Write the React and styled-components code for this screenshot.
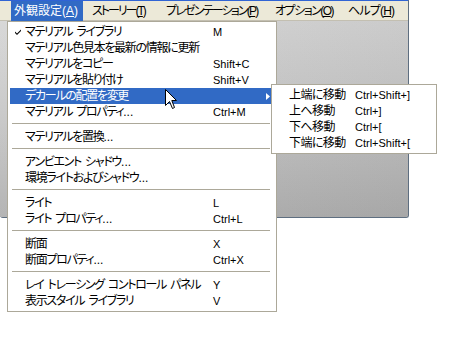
import React from 'react';
import styled, { createGlobalStyle } from 'styled-components';

const Global = createGlobalStyle`
  html, body { margin: 0; padding: 0; background: #fff; }
  body {
    font-family: "Liberation Sans", "Noto Sans CJK JP", sans-serif;
    font-size: 12px;
    font-feature-settings: "palt" 1;
    color: #000;
  }
`;

const Page = styled.div`
  position: relative;
  width: 476px;
  height: 346px;
  overflow: hidden;
  background: #fff;
`;

const Window = styled.div`
  width: 408px;
  height: 217px;
  display: flex;
  flex-direction: column;
  border-right: 1px solid #5e6e80;
  border-bottom: 1px solid #5e6e80;
  border-bottom-right-radius: 3px;
  border-bottom-left-radius: 3px;
  overflow: hidden;
  background: #c4c4c4;
`;

const TopLine = styled.div`
  height: 1px;
  background: #3064d4;
`;

const MenuBar = styled.div`
  height: 20px;
  display: flex;
  align-items: stretch;
  gap: 6px;
  padding-left: 11px;
  background: #ece9d8;
  box-shadow: inset 0 -1px 0 #c3bfb1;
`;

const BarItem = styled.div`
  width: ${p => p.$w}px;
  padding-left: 3px;
  box-sizing: border-box;
  display: flex;
  align-items: center;
  white-space: nowrap;
  line-height: 20px;
  letter-spacing: ${p => p.$ls}px;
  background: ${p => (p.$active ? '#316ac5' : 'transparent')};
  color: ${p => (p.$active ? '#fff' : '#000')};
  u { text-decoration: underline; text-underline-offset: 1px; }
`;

const Content = styled.div`
  flex: 1;
  background:
    linear-gradient(90deg, rgba(255,255,255,0.06), rgba(0,0,0,0.05)),
    linear-gradient(180deg, #d6d6d6 0%, #c6c6c6 50%, #b0b0b0 100%);
`;

const Menu = styled.div`
  position: absolute;
  left: ${p => p.$x}px;
  top: ${p => p.$y}px;
  width: ${p => p.$w}px;
  box-sizing: border-box;
  background: #fff;
  border: 1px solid #aca899;
  padding: 2px;
  display: flex;
  flex-direction: column;
`;

const Row = styled.div`
  height: 16px;
  line-height: 16px;
  display: grid;
  grid-template-columns: 15px ${p => p.$labelCol}px 1fr 10px;
  align-items: center;
  white-space: nowrap;
  background: ${p => (p.$active ? '#316ac5' : 'transparent')};
  color: ${p => (p.$active ? '#fff' : '#000')};
`;

const CheckCell = styled.div`
  display: flex;
  align-items: center;
  justify-content: flex-end;
  padding-right: 4px;
  height: 16px;
`;

const Label = styled.span`
  font-size: 12px;
  letter-spacing: ${p => p.$ls}px;
  word-spacing: 2px;
`;

const Dots = styled.span`
  letter-spacing: 0;
`;

const Shortcut = styled.span`
  font-size: 11px;
  font-family: "Liberation Sans", sans-serif;
`;

const ArrowCell = styled.div`
  display: flex;
  align-items: center;
  padding-left: 2px;
  height: 16px;
`;

const Separator = styled.div`
  height: 1px;
  margin: 3px 4px 5px 2px;
  background: #aca899;
`;

const Cursor = styled.svg`
  position: absolute;
  left: 165px;
  top: 89px;
`;

const Check = () => (
  <svg width="6" height="6" viewBox="0 0 6 6">
    <path d="M0 2.5 L0 4 L2 6 L6 2 L6 0.5 L2 4.5 Z" fill="#000" />
  </svg>
);

const SubArrow = () => (
  <svg width="4" height="7" viewBox="0 0 4 7">
    <path d="M0 0 L4 3.5 L0 7 Z" fill="#fff" />
  </svg>
);

const barItems = [
  { pre: '外観設定(', key: 'A', w: 72, ls: 0, active: true },
  { pre: 'ストーリー(', key: 'T', w: 68, ls: -2 },
  { pre: 'プレゼンテーション(', key: 'P', w: 103, ls: -1.8 },
  { pre: 'オプション(', key: 'O', w: 67, ls: -1.5 },
  { pre: 'ヘルプ(', key: 'H', w: 52, ls: -0.8 },
];

const menuItems = [
  { label: 'マテリアル ライブラリ', sc: 'M', checked: true },
  { label: 'マテリアル色見本を最新の情報に更新' },
  { label: 'マテリアルをコピー', sc: 'Shift+C' },
  { label: 'マテリアルを貼り付け', sc: 'Shift+V' },
  { label: 'デカールの配置を変更', sub: true, active: true },
  { label: 'マテリアル プロパティ...', sc: 'Ctrl+M' },
  'sep',
  { label: 'マテリアルを置換...' },
  'sep',
  { label: 'アンビエント シャドウ...' },
  { label: '環境ライトおよびシャドウ...' },
  'sep',
  { label: 'ライト', sc: 'L' },
  { label: 'ライト プロパティ...', sc: 'Ctrl+L' },
  'sep',
  { label: '断面', sc: 'X' },
  { label: '断面プロパティ...', sc: 'Ctrl+X' },
  'sep',
  { label: 'レイ トレーシング コントロール パネル', sc: 'Y' },
  { label: '表示スタイル ライブラリ', sc: 'V' },
];

const subItems = [
  { label: '上端に移動', sc: 'Ctrl+Shift+]' },
  { label: '上へ移動', sc: 'Ctrl+]' },
  { label: '下へ移動', sc: 'Ctrl+[' },
  { label: '下端に移動', sc: 'Ctrl+Shift+[' },
];

const ItemLabel = ({ text, ls }) => {
  const hasDots = text.endsWith('...');
  const main = hasDots ? text.slice(0, -3) : text;
  return (
    <Label $ls={ls}>
      {main}
      {hasDots && <Dots>...</Dots>}
    </Label>
  );
};

const MenuRows = ({ items, labelCol, ls }) =>
  items.map((it, i) =>
    it === 'sep' ? (
      <Separator key={i} />
    ) : (
      <Row key={i} $active={it.active} $labelCol={labelCol}>
        <CheckCell>{it.checked && <Check />}</CheckCell>
        <ItemLabel text={it.label} ls={ls} />
        <Shortcut>{it.sc || ''}</Shortcut>
        <ArrowCell>{it.sub && <SubArrow />}</ArrowCell>
      </Row>
    )
  );

export default function App() {
  return (
    <Page>
      <Global />
      <Window>
        <TopLine />
        <MenuBar>
          {barItems.map(b => (
            <BarItem key={b.key} $w={b.w} $ls={b.ls} $active={b.active}>
              {b.pre}
              <u>{b.key}</u>)
            </BarItem>
          ))}
        </MenuBar>
        <Content />
      </Window>

      <Menu $x={7} $y={21} $w={270}>
        <MenuRows items={menuItems} labelCol={188} ls={-1.3} />
      </Menu>

      <Menu $x={271} $y={84} $w={166}>
        <MenuRows items={subItems} labelCol={66} ls={-0.6} />
      </Menu>

      <Cursor width="13" height="21" viewBox="0 0 13 21">
        <path
          d="M0.5 0.5 L0.5 16.5 L4.5 12.5 L7.5 19.5 L9.5 18.5 L6.8 11.5 L11.5 11.5 Z"
          fill="#fff"
          stroke="#000"
          strokeWidth="1"
          strokeLinejoin="miter"
        />
      </Cursor>
    </Page>
  );
}
